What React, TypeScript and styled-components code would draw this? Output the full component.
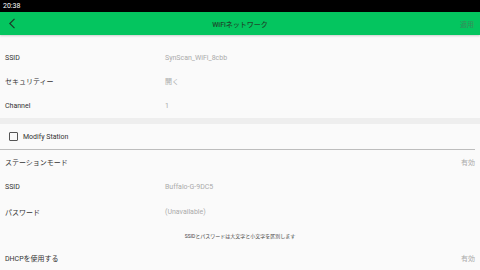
import * as React from "react";
import styled, { createGlobalStyle } from "styled-components";

const GlobalStyle = createGlobalStyle`
  html, body {
    margin: 0;
    padding: 0;
    background: #fafafa;
  }
  body {
    font-family: Roboto, "Noto Sans CJK JP", sans-serif;
  }
`;

const Screen = styled.div`
  width: 480px;
  height: 270px;
  overflow: hidden;
  display: flex;
  flex-direction: column;
  background: #fafafa;
`;

const StatusBar = styled.div`
  height: 12px;
  background: #000;
  color: #ffffff;
  font-size: 7px;
  line-height: 12px;
  padding-left: 3px;
`;

const Header = styled.div`
  height: 23px;
  background: #04c55f;
  display: grid;
  grid-template-columns: 40px 1fr 40px;
  align-items: center;
  box-shadow: 0 1px 2px rgba(0, 0, 0, 0.18);
  position: relative;
  z-index: 1;
`;

const Back = styled.div`
  padding-left: 8px;
  display: flex;
  align-items: center;
`;

const Title = styled.div`
  text-align: center;
  font-size: 7px;
  font-weight: 500;
  color: #1d4a2c;
`;

const Apply = styled.div`
  text-align: right;
  padding-right: 6px;
  font-size: 7px;
  color: #3a8a5a;
`;

const Content = styled.div`
  padding-top: 13px;
  display: flex;
  flex-direction: column;
`;

const Row = styled.div<{ h?: number }>`
  height: ${(p) => p.h ?? 25}px;
  display: flex;
  align-items: center;
  padding: 0 5px;
  font-size: 7px;
  color: #333;
`;

const Label = styled.div`
  width: 160px;
`;

const Value = styled.div<{ right?: boolean }>`
  flex: 1;
  color: #aaa;
  text-align: ${(p) => (p.right ? "right" : "left")};
`;

const Band = styled.div`
  height: 6px;
  background: #eeeeee;
`;

const CheckRow = styled.div`
  height: 25px;
  display: flex;
  align-items: center;
  gap: 5px;
  padding-left: 9px;
  font-size: 7px;
  color: #333;
`;

const Box = styled.div`
  width: 7px;
  height: 7px;
  border: 1px solid #555;
  border-radius: 1px;
`;

const Divider = styled.div`
  height: 1px;
  background: #bdbdbd;
  margin-right: 5px;
`;

const Hint = styled.div`
  height: 23px;
  display: flex;
  align-items: center;
  justify-content: center;
  font-size: 5px;
  color: #444;
`;

export default function App() {
  return (
    <Screen>
      <GlobalStyle />
      <StatusBar>20:38</StatusBar>
      <Header>
        <Back>
          <svg width="8" height="11" viewBox="0 0 8 11">
            <path d="M6.5 0.8 L1.8 5.5 L6.5 10.2" fill="none" stroke="#1d3a28" strokeWidth="1.2" />
          </svg>
        </Back>
        <Title>WiFiネットワーク</Title>
        <Apply>適用</Apply>
      </Header>
      <Content>
        <Row h={20}>
          <Label>SSID</Label>
          <Value>SynScan_WiFi_8cbb</Value>
        </Row>
        <Row>
          <Label>セキュリティー</Label>
          <Value>開く</Value>
        </Row>
        <Row h={25}>
          <Label>Channel</Label>
          <Value>1</Value>
        </Row>
        <Band />
        <CheckRow>
          <Box />
          Modify Station
        </CheckRow>
        <Divider />
        <Row h={24}>
          <Label>ステーションモード</Label>
          <Value right>有効</Value>
        </Row>
        <Row>
          <Label>SSID</Label>
          <Value>Buffalo-G-9DC5</Value>
        </Row>
        <Row>
          <Label>パスワード</Label>
          <Value>(Unavailable)</Value>
        </Row>
        <Hint>SSIDとパスワードは大文字と小文字を区別します</Hint>
        <Row h={21}>
          <Label>DHCPを使用する</Label>
          <Value right>有効</Value>
        </Row>
      </Content>
    </Screen>
  );
}
